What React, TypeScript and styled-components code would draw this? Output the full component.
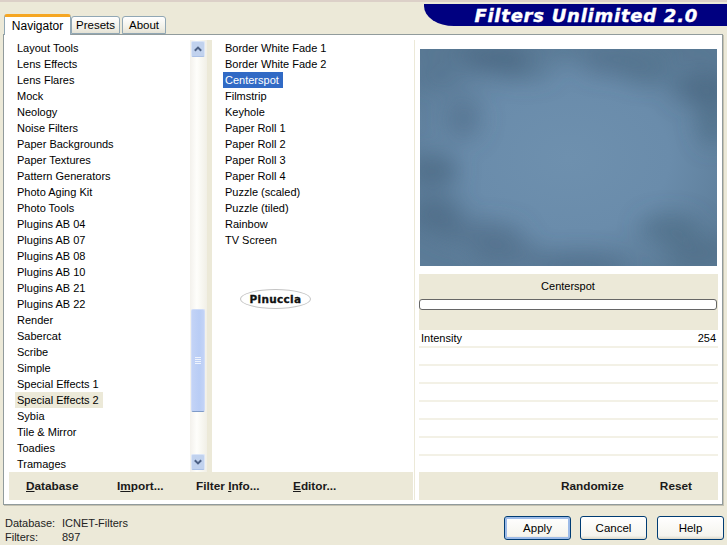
import React from "react";
import styled, { createGlobalStyle } from "styled-components";

const Global = createGlobalStyle`
  html, body { margin: 0; padding: 0; background: #ece9d8; }
  body { font-family: "Liberation Sans", Arial, sans-serif; font-size: 11px; color: #000; }
`;

const Page = styled.div`
  width: 727px; height: 545px; overflow: hidden; background: #ece9d8;
  display: flex; flex-direction: column;
`;
const TopStrip = styled.div`height: 2px; background: #dcd0c8; flex: none;`;
const Header = styled.div`
  height: 32px; flex: none; display: flex; justify-content: space-between;
  align-items: flex-start; padding-left: 4px; position: relative; z-index: 1;
`;
const Tabs = styled.div`display: flex; align-items: flex-end; height: 33px;`;
const Tab = styled.div<{ $active?: boolean; $w: number }>`
  box-sizing: border-box; width: ${p => p.$w}px;
  height: ${p => (p.$active ? 21 : 18)}px;
  margin-right: ${p => (p.$active ? 0 : 2)}px;
  margin-bottom: ${p => (p.$active ? 0 : 1)}px;
  display: flex; align-items: center; justify-content: center;
  border: 1px solid #91a7b4;
  border-bottom: ${p => (p.$active ? "none" : "1px solid #91a7b4")};
  border-top: ${p => (p.$active ? "3px solid #f5a623" : "1px solid #91a7b4")};
  border-radius: 3px 3px 0 0;
  background: ${p => (p.$active ? "#ffffff" : "linear-gradient(#ffffff, #f0efe6 70%, #e4e2d5)")};
  padding-bottom: ${p => (p.$active ? 1 : 0)}px;
  font-size: ${p => (p.$active ? 12 : 11.5)}px;
`;
const Banner = styled.div`
  width: 303px; height: 22px; margin-top: 2px; background: #000080; color: #fff;
  border-bottom-left-radius: 30px 20px; box-sizing: border-box;
  padding: 0 29px 0 40px; display: flex; align-items: center; justify-content: flex-end;
  font: italic bold 18px "DejaVu Sans", Verdana, sans-serif; letter-spacing: 0.75px;
  -webkit-text-stroke: 0.4px #fff; white-space: nowrap;
`;
const Pane = styled.div`
  box-sizing: border-box; width: 720px; height: 471px; margin-left: 3px; flex: none;
  background: #fff; border: 1px solid #919b9c; box-shadow: 1px 1px 0 #c4c1b0;
  padding: 5px 3px 4px 5px; display: flex;
`;
const LeftColumn = styled.div`width: 404px; display: flex; flex-direction: column; flex: none;`;
const ListsRow = styled.div`display: flex; height: 432px; flex: none;`;
const ListBox = styled.div<{ $w: number; $inset: number }>`
  width: ${p => p.$w}px; flex: none; height: 432px; overflow: hidden; background: #fff;
  padding-left: ${p => p.$inset}px; box-sizing: border-box;
`;
const Item = styled.div<{ $state?: "selected" | "marked" }>`
  height: 16px; line-height: 17px; width: fit-content; white-space: nowrap;
  padding: 0 4px 0 2px;
  background: ${p => (p.$state === "selected" ? "#316ac5" : p.$state === "marked" ? "#ece9d8" : "transparent")};
  color: ${p => (p.$state === "selected" ? "#fff" : "#000")};
`;
const Scrollbar = styled.div`
  width: 17px; flex: none; height: 432px; box-sizing: border-box; padding: 1px 2px 1px 1px;
  display: flex; flex-direction: column; background: linear-gradient(90deg, #f3f1ec, #fefefb 40%, #f1efe6);
`;
const ScrollButton = styled.div`
  width: 14px; height: 16px; flex: none; border-radius: 2px; box-sizing: border-box;
  background: #c1d2ee; border: 1px solid #dbe5f7; border-bottom-color: #aac0e6;
  display: flex; align-items: center; justify-content: center;
`;
const ScrollGap = styled.div<{ $h: number }>`height: ${p => p.$h}px; flex: none;`;
const Thumb = styled.div`
  width: 14px; height: 103px; flex: none; box-sizing: border-box;
  background: linear-gradient(90deg, #c3d3f6, #b9cdf5 60%, #c3d3f6);
  border: 1px solid #cfdcf8; border-bottom: 1px solid #7f9bc8; border-radius: 2px;
  display: flex; align-items: center; justify-content: center;
`;
const Gutter = styled.div`width: 5px; flex: none; background: #ece9d8;`;
const Stamp = styled.div`
  width: 71px; height: 20px; margin: 41px 0 0 17px; box-sizing: border-box;
  border: 1px solid #c4c4c4; border-radius: 50%; display: flex; align-items: center; justify-content: center;
  font: bold 10.5px "DejaVu Sans", sans-serif; letter-spacing: 0.3px; color: #111; -webkit-text-stroke: 0.3px #111;
`;
const Toolbar = styled.div`
  height: 28px; flex: none; background: #ece9d8; display: grid;
  grid-template-columns: 91px 79px 97px 1fr; padding-left: 17px; align-items: center;
  font-size: 11.8px; font-weight: bold; color: #1a1a1a;
`;
const RightColumn = styled.div`
  width: 304px; flex: none; display: flex; flex-direction: column; box-sizing: border-box;
  padding-left: 4px; margin-left: 1px; border-left: 1px solid #ece9d8;
`;
const PreviewArea = styled.div`height: 234px; flex: none; padding: 9px 0 0 1px; box-sizing: border-box;`;
const PreviewFrame = styled.svg`display: block; width: 297px; height: 217px;`;
const FilterPanel = styled.div`
  height: 56px; flex: none; background: #ece9d8; display: flex; flex-direction: column; align-items: stretch;
`;
const FilterName = styled.div`height: 25px; line-height: 25px; text-align: center; padding-right: 1px;`;
const FilterBar = styled.div`
  height: 11px; width: 298px; box-sizing: border-box; background: #fff;
  border: 1px solid #666; border-radius: 3px;
`;
const Params = styled.div`height: 142px; flex: none; overflow: hidden; background: #fff;`;
const ParamRow = styled.div`
  height: 18px; box-sizing: border-box; border-bottom: 2px solid #f3f1e6;
  display: flex; justify-content: space-between; align-items: center; padding: 0 2px 1px 2px;
`;
const ActionBar = styled.div`
  height: 28px; flex: none; background: #ece9d8; display: flex; justify-content: flex-end;
  gap: 36px; align-items: center; padding-right: 26px; font-size: 11.8px; font-weight: bold; color: #1a1a1a;
`;
const Footer = styled.div`
  flex: 1; display: flex; justify-content: space-between; padding: 10px 3px 0 5px;
`;
const Info = styled.div`
  display: grid; grid-template-columns: 57px auto; grid-auto-rows: 14px; line-height: 14px; align-content: start; padding-top: 1px; color: #222;
`;
const Buttons = styled.div`display: flex; gap: 9px; padding-top: 1px;`;
const Button = styled.div<{ $default?: boolean; $spaced?: boolean }>`
  width: 67px; height: 24px; box-sizing: border-box; border: 1px solid #003c74; border-radius: 3px;
  display: flex; align-items: center; justify-content: center; font-size: 11.5px;
  margin-left: ${p => (p.$spaced ? 1 : 0)}px;
  background: linear-gradient(#ffffff, #f5f4ee 85%, #dcd8ca);
  box-shadow: ${p => (p.$default ? "inset 0 0 0 2px #9dbbe8" : "none")};
`;

const left = ["Layout Tools","Lens Effects","Lens Flares","Mock","Neology","Noise Filters","Paper Backgrounds","Paper Textures","Pattern Generators","Photo Aging Kit","Photo Tools","Plugins AB 04","Plugins AB 07","Plugins AB 08","Plugins AB 10","Plugins AB 21","Plugins AB 22","Render","Sabercat","Scribe","Simple","Special Effects 1","Special Effects 2","Sybia","Tile & Mirror","Toadies","Tramages"];
const mid = ["Border White Fade 1","Border White Fade 2","Centerspot","Filmstrip","Keyhole","Paper Roll 1","Paper Roll 2","Paper Roll 3","Paper Roll 4","Puzzle (scaled)","Puzzle (tiled)","Rainbow","TV Screen"];

const blots: [number, number, number, number, number][] = [
  [75, 10, 34, 12, .8],[105, 22, 28, 9, .5],[190, 15, 28, 10, .55],[228, 22, 26, 11, .6],[20, 28, 24, 10, .4],
  [283, 38, 30, 16, .75],[44, 70, 18, 22, .45],[292, 70, 14, 28, .6],[12, 122, 26, 16, .75],[15, 165, 26, 18, .65],
  [60, 185, 44, 12, .55],[250, 180, 30, 14, .6],[160, 216, 50, 10, .7],[85, 205, 34, 12, .55],[280, 205, 34, 16, .5],[148, 0, 190, 7, .5],
];

const Up = () => <svg width="8" height="6" viewBox="0 0 8 6"><path d="M.8 4.8 4 1.6l3.2 3.2" fill="none" stroke="#4d6185" strokeWidth="2" /></svg>;
const Down = () => <svg width="8" height="6" viewBox="0 0 8 6"><path d="M.8 1.2 4 4.4l3.2-3.2" fill="none" stroke="#4d6185" strokeWidth="2" /></svg>;
const Grip = () => <svg width="6" height="8" viewBox="0 0 6 8"><path d="M0 .5h6M0 2.5h6M0 4.5h6M0 6.5h6" stroke="#eef3fd" strokeWidth="1" /></svg>;

export default function App() {
  return (
    <Page>
      <Global />
      <TopStrip />
      <Header>
        <Tabs>
          <Tab $active $w={67}>Navigator</Tab>
          <Tab $w={49}>Presets</Tab>
          <Tab $w={44}>About</Tab>
        </Tabs>
        <Banner>Filters Unlimited 2.0</Banner>
      </Header>
      <Pane>
        <LeftColumn>
          <ListsRow>
            <ListBox $w={181} $inset={6}>
              {left.map(t => <Item key={t} $state={t === "Special Effects 2" ? "marked" : undefined}>{t}</Item>)}
            </ListBox>
            <Scrollbar>
              <ScrollButton><Up /></ScrollButton>
              <ScrollGap $h={252} />
              <Thumb><Grip /></Thumb>
              <ScrollGap $h={42} />
              <ScrollButton><Down /></ScrollButton>
            </Scrollbar>
            <Gutter />
            <ListBox $w={201} $inset={11}>
              {mid.map(t => <Item key={t} $state={t === "Centerspot" ? "selected" : undefined}>{t}</Item>)}
              <Stamp>Pinuccia</Stamp>
            </ListBox>
          </ListsRow>
          <Toolbar>
            <span><u>D</u>atabase</span>
            <span>I<u>m</u>port...</span>
            <span>Filter <u>I</u>nfo...</span>
            <span><u>E</u>ditor...</span>
          </Toolbar>
        </LeftColumn>
        <RightColumn>
          <PreviewArea>
            <PreviewFrame viewBox="0 0 297 217">
              <defs>
                <radialGradient id="vig" cx="50%" cy="50%" r="62%">
                  <stop offset="0" stopColor="#6e90ae" />
                  <stop offset=".55" stopColor="#6a8cab" />
                  <stop offset="1" stopColor="#5c7c98" />
                </radialGradient>
                <filter id="soft" x="-20%" y="-20%" width="140%" height="140%"><feGaussianBlur stdDeviation="11" /></filter>
              </defs>
              <rect width="297" height="217" fill="url(#vig)" />
              <g filter="url(#soft)" fill="#4a6781">
                {blots.map(([cx, cy, rx, ry, o], i) => <ellipse key={i} cx={cx} cy={cy} rx={rx} ry={ry} opacity={o} />)}
              </g>
            </PreviewFrame>
          </PreviewArea>
          <FilterPanel>
            <FilterName>Centerspot</FilterName>
            <FilterBar />
          </FilterPanel>
          <Params>
            <ParamRow><span>Intensity</span><span>254</span></ParamRow>
            {Array.from({ length: 7 }).map((_, i) => <ParamRow key={i} />)}
          </Params>
          <ActionBar><span>Randomize</span><span>Reset</span></ActionBar>
        </RightColumn>
      </Pane>
      <Footer>
        <Info>
          <span>Database:</span><span>ICNET-Filters</span>
          <span>Filters:</span><span>897</span>
        </Info>
        <Buttons>
          <Button $default>Apply</Button>
          <Button>Cancel</Button>
          <Button $spaced>Help</Button>
        </Buttons>
      </Footer>
    </Page>
  );
}
